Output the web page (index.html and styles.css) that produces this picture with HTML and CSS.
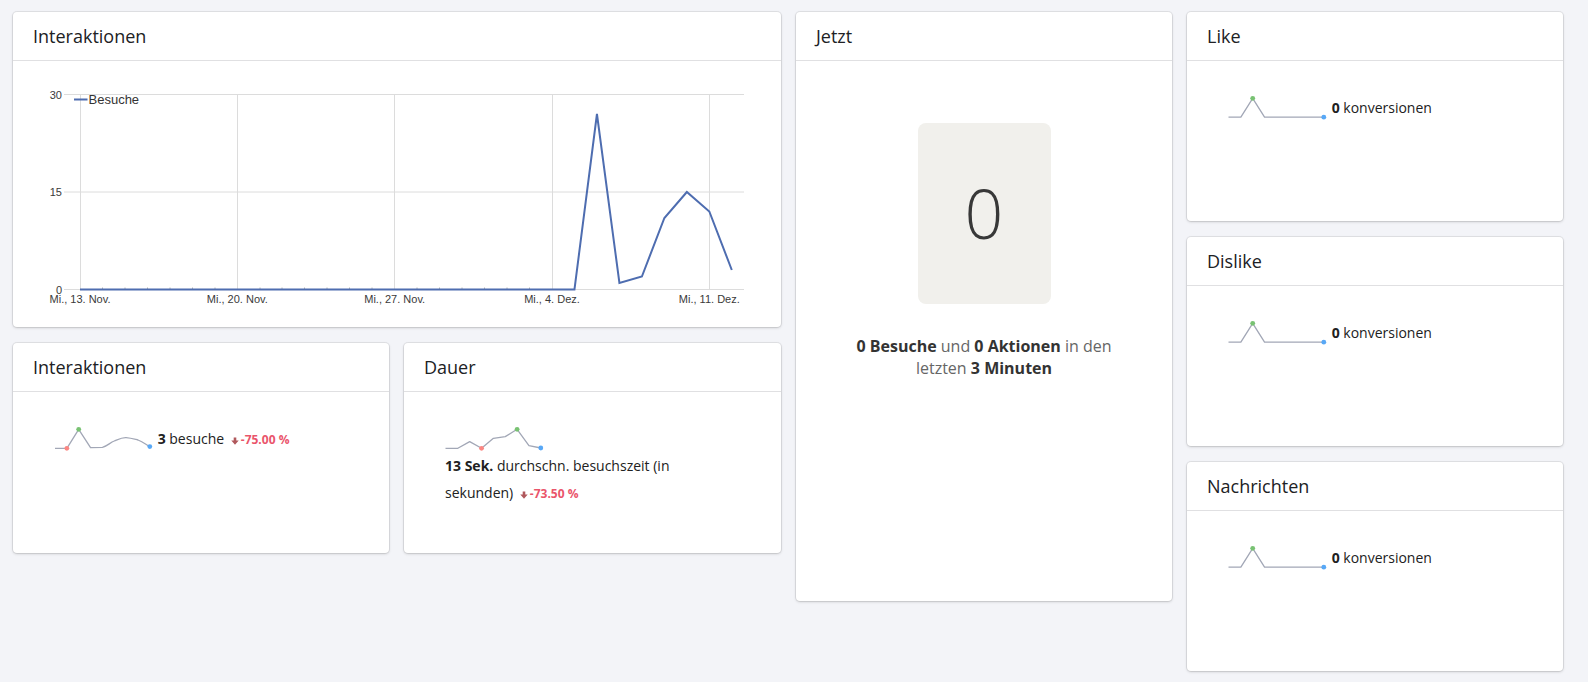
FILE: index.html
```html
<!DOCTYPE html>
<html lang="de">
<head>
<meta charset="utf-8">
<title>Dashboard</title>
<link rel="stylesheet" href="styles.css">
</head>
<body>
<div class="dashboard">
  <div class="col-wide">
    <section class="card card-chart">
      <header class="card-head"><h2>Interaktionen</h2></header>
      <div class="chart-body">
        <svg class="chart" width="768" height="266" viewBox="13 61 768 266">
          <g class="grid">
            <line x1="64" y1="94.5" x2="744" y2="94.5"/>
            <line x1="64" y1="192" x2="744" y2="192"/>
            <line x1="64" y1="289.5" x2="744" y2="289.5"/>
            <line x1="80.5" y1="94.5" x2="80.5" y2="289.5"/>
            <line x1="237.5" y1="94.5" x2="237.5" y2="289.5"/>
            <line x1="394.5" y1="94.5" x2="394.5" y2="289.5"/>
            <line x1="552.5" y1="94.5" x2="552.5" y2="289.5"/>
            <line x1="709.5" y1="94.5" x2="709.5" y2="289.5"/>
          </g>
          <g class="ticks">
            <line x1="102.5" y1="287.5" x2="102.5" y2="289"/>
            <line x1="125" y1="287.5" x2="125" y2="289"/>
            <line x1="147.5" y1="287.5" x2="147.5" y2="289"/>
            <line x1="170" y1="287.5" x2="170" y2="289"/>
            <line x1="192.5" y1="287.5" x2="192.5" y2="289"/>
            <line x1="215" y1="287.5" x2="215" y2="289"/>
            <line x1="260" y1="287.5" x2="260" y2="289"/>
            <line x1="282" y1="287.5" x2="282" y2="289"/>
            <line x1="304.5" y1="287.5" x2="304.5" y2="289"/>
            <line x1="327" y1="287.5" x2="327" y2="289"/>
            <line x1="349.5" y1="287.5" x2="349.5" y2="289"/>
            <line x1="372" y1="287.5" x2="372" y2="289"/>
            <line x1="417" y1="287.5" x2="417" y2="289"/>
            <line x1="439.5" y1="287.5" x2="439.5" y2="289"/>
            <line x1="462" y1="287.5" x2="462" y2="289"/>
            <line x1="484.5" y1="287.5" x2="484.5" y2="289"/>
            <line x1="507" y1="287.5" x2="507" y2="289"/>
            <line x1="529.5" y1="287.5" x2="529.5" y2="289"/>
            <line x1="574.5" y1="287.5" x2="574.5" y2="289"/>
          </g>
          <g class="ylabels">
            <text x="62" y="98.5">30</text>
            <text x="62" y="196">15</text>
            <text x="62" y="293.5">0</text>
          </g>
          <g class="xlabels">
            <text x="80" y="302.5">Mi., 13. Nov.</text>
            <text x="237.3" y="302.5">Mi., 20. Nov.</text>
            <text x="394.7" y="302.5">Mi., 27. Nov.</text>
            <text x="552" y="302.5">Mi., 4. Dez.</text>
            <text x="709.3" y="302.5">Mi., 11. Dez.</text>
          </g>
          <polyline class="series" points="80,289.5 574.47,289.5 596.95,114 619.42,283 641.9,276.5 664.38,218 686.85,192 709.33,211.5 731.8,270"/>
          <line class="legend-line" x1="74" y1="99.5" x2="87.5" y2="99.5"/>
          <text class="legend-text" x="88.5" y="104.3">Besuche</text>
        </svg>
      </div>
    </section>
    <div class="pair">
      <section class="card card-small card-row2">
        <header class="card-head"><h2>Interaktionen</h2></header>
        <div class="spark-body">
          <div class="spark-row">
            <svg class="spark" width="100" height="27" viewBox="0 0 100 27">
              <path d="M1 23.3 L12.85 23.3 L24.7 4.3 L36.55 22.6 L48.4 22.3 C53 21.5 56 17.6 60.25 16 C65 14 68 12.3 72.1 12.6 C77 13 80 14 83.95 15 C88 16.5 92 19.5 95.8 21.6"/>
              <circle class="dot-min" cx="12.85" cy="23.3" r="2.4"/>
              <circle class="dot-max" cx="24.7" cy="4.3" r="2.4"/>
              <circle class="dot-last" cx="95.8" cy="21.6" r="2.4"/>
            </svg>
            <span class="spark-text"><strong>3</strong> besuche <span class="evo"><svg class="arrow" width="8" height="8" viewBox="0 0 8 8"><path d="M2.7 0.5h2.6v3.1h2.4L4 7.8 0.3 3.6h2.4z"/></svg>-75.00 %</span></span>
          </div>
        </div>
      </section>
      <section class="card card-small card-row2">
        <header class="card-head"><h2>Dauer</h2></header>
        <div class="spark-body">
          <div class="spark-row">
            <svg class="spark" width="100" height="27" viewBox="0 0 100 27">
              <path d="M0.5 23.3 L12.85 23.3 L24.7 16.6 L36.55 23.3 L48.4 13.3 L60.25 11.6 L72.1 4.3 L83.95 20.6 L95.8 23"/>
              <circle class="dot-min" cx="36.55" cy="23.3" r="2.4"/>
              <circle class="dot-max" cx="72.1" cy="4.3" r="2.4"/>
              <circle class="dot-last" cx="95.8" cy="23" r="2.4"/>
            </svg>
            <span class="spark-text"><strong>13 Sek.</strong> durchschn. besuchszeit (in sekunden) <span class="evo"><svg class="arrow" width="8" height="8" viewBox="0 0 8 8"><path d="M2.7 0.5h2.6v3.1h2.4L4 7.8 0.3 3.6h2.4z"/></svg>-73.50 %</span></span>
          </div>
        </div>
      </section>
    </div>
  </div>

  <section class="card card-live">
    <header class="card-head"><h2>Jetzt</h2></header>
    <div class="live-body">
      <div class="live-box">0</div>
      <p class="live-text"><strong>0 Besuche</strong> und <strong>0 Aktionen</strong> in den letzten <strong>3 Minuten</strong></p>
    </div>
  </section>

  <div class="col">
    <section class="card card-small">
      <header class="card-head"><h2>Like</h2></header>
      <div class="spark-body">
        <div class="spark-row">
          <svg class="spark" width="100" height="27" viewBox="0 0 100 27">
            <path d="M0.5 23.2 L12.85 23.2 L24.7 4.3 L36.55 23.2 L95.8 23.2"/>
            <circle class="dot-max" cx="24.7" cy="4.3" r="2.4"/>
            <circle class="dot-last" cx="95.8" cy="23.2" r="2.4"/>
          </svg>
          <span class="spark-text"><strong>0</strong> konversionen</span>
        </div>
      </div>
    </section>
    <section class="card card-small">
      <header class="card-head"><h2>Dislike</h2></header>
      <div class="spark-body">
        <div class="spark-row">
          <svg class="spark" width="100" height="27" viewBox="0 0 100 27">
            <path d="M0.5 23.2 L12.85 23.2 L24.7 4.3 L36.55 23.2 L95.8 23.2"/>
            <circle class="dot-max" cx="24.7" cy="4.3" r="2.4"/>
            <circle class="dot-last" cx="95.8" cy="23.2" r="2.4"/>
          </svg>
          <span class="spark-text"><strong>0</strong> konversionen</span>
        </div>
      </div>
    </section>
    <section class="card card-small">
      <header class="card-head"><h2>Nachrichten</h2></header>
      <div class="spark-body">
        <div class="spark-row">
          <svg class="spark" width="100" height="27" viewBox="0 0 100 27">
            <path d="M0.5 23.2 L12.85 23.2 L24.7 4.3 L36.55 23.2 L95.8 23.2"/>
            <circle class="dot-max" cx="24.7" cy="4.3" r="2.4"/>
            <circle class="dot-last" cx="95.8" cy="23.2" r="2.4"/>
          </svg>
          <span class="spark-text"><strong>0</strong> konversionen</span>
        </div>
      </div>
    </section>
  </div>
</div>
</body>
</html>
```

FILE: styles.css
```css
* { box-sizing: border-box; }

html, body {
  margin: 0;
  padding: 0;
  background: #f3f4f8;
}

body {
  font-family: "Open Sans", "Noto Sans", "Liberation Sans", sans-serif;
  color: #212121;
  width: 1588px;
  height: 682px;
  overflow: hidden;
}

.dashboard {
  display: grid;
  grid-template-columns: 376px 377px 376px 376px;
  column-gap: 15px;
  align-items: start;
  padding: 12px 0 0 13px;
}

.col-wide {
  grid-column: span 2;
  display: flex;
  flex-direction: column;
  gap: 16px;
}

.pair {
  display: grid;
  grid-template-columns: 376px 377px;
  column-gap: 15px;
}

.col {
  display: flex;
  flex-direction: column;
  gap: 16px;
}

.card {
  background: #fff;
  border-radius: 4px;
  box-shadow: 0 0 0 1px rgba(0, 0, 0, 0.07), 0 1px 3px rgba(0, 0, 0, 0.16);
  overflow: hidden;
}

.card-head {
  padding: 12px 20px;
  border-bottom: 1px solid #e0e0e2;
}

.card-head h2 {
  margin: 0;
  font-size: 18px;
  line-height: 24px;
  font-weight: 400;
  color: #202124;
}

.card-chart { height: 315px; }
.card-small { height: 209px; }
.card-row2 { height: 210px; }
.card-live { height: 589px; }

.chart-body { height: 266px; }

.chart { display: block; }

.chart .grid line {
  stroke: #dcdcdc;
  stroke-width: 1;
}

.chart .ticks line {
  stroke: #b4b4b4;
  stroke-width: 1;
}

.chart text {
  font-family: "Liberation Sans", Arial, sans-serif;
  font-size: 11px;
  fill: #3a3a3a;
}

.chart .ylabels text { text-anchor: end; }
.chart .xlabels text { text-anchor: middle; }

.chart .series {
  fill: none;
  stroke: #4e6db0;
  stroke-width: 2;
  stroke-linejoin: miter;
}

.chart .legend-line {
  stroke: #4e6db0;
  stroke-width: 2;
}

.chart .legend-text {
  font-size: 13px;
  fill: #333;
}

.spark-body {
  padding: 33px 48px 0 41px;
}

.spark-row {
  font-size: 14px;
  line-height: 27px;
}

.spark {
  vertical-align: top;
}

.spark path {
  fill: none;
  stroke: #a2a7b6;
  stroke-width: 1.3;
  stroke-linejoin: round;
}

.dot-min { fill: #fb8783; }
.dot-max { fill: #78c272; }
.dot-last { fill: #58a8f6; }

.spark-text {
  display: inline-block;
  vertical-align: top;
  color: #212121;
}

.spark-text strong {
  font-weight: 700;
}

.evo {
  margin-left: 3px;
  font-size: 12px;
  font-weight: 700;
  color: #ea556b;
  white-space: nowrap;
}

.arrow {
  vertical-align: -1px;
  margin-right: 2px;
}

.arrow path { fill: #b0585c; }

.live-body {
  padding: 62px 41px 0;
  display: flex;
  flex-direction: column;
  align-items: center;
}

.live-box {
  width: 133px;
  height: 181px;
  border-radius: 8px;
  background: #f1f0ec;
  display: flex;
  align-items: center;
  justify-content: center;
  font-size: 68px;
  font-weight: 300;
  color: #383838;
  padding-bottom: 2px;
}

.live-text {
  margin: 31px 0 0;
  font-size: 16px;
  line-height: 22px;
  text-align: center;
  color: #666;
}

.live-text strong {
  color: #333;
  font-weight: 700;
}
```
